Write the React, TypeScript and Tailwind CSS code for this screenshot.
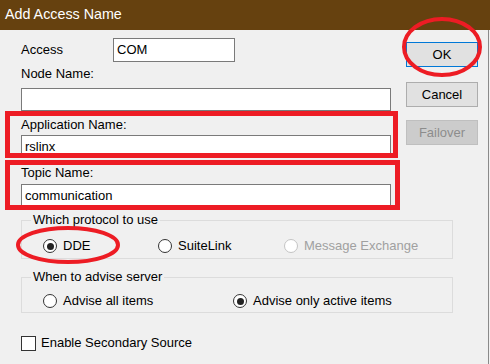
import React from "react";

const font = { fontFamily: '"Liberation Sans", Arial, sans-serif' };

function Radio({ checked, disabled, label }: { checked?: boolean; disabled?: boolean; label: string }) {
  return (
    <div className="flex items-center h-[16px]">
      <div
        className={
          "w-[14px] h-[14px] rounded-full bg-white border flex items-center justify-center " +
          (disabled ? "border-[#c4c4c4]" : "border-[#333333]")
        }
      >
        {checked && <div className="w-[7px] h-[7px] rounded-full bg-[#222222]" />}
      </div>
      <span className={"ml-[6px] leading-[16px] " + (disabled ? "text-[#a0a0a0]" : "text-black")}>{label}</span>
    </div>
  );
}

export default function App() {
  return (
    <div className="w-[490px] h-[364px] bg-[#f0f0f0] relative overflow-hidden text-[13px] text-black" style={font}>
      <div className="h-[30px] bg-[#66410f] text-white text-[14.3px] flex items-center pl-[5px]">Add Access Name</div>
      <div className="h-[334px] w-[489px] border-r border-[#8a8a8a]">
        <div className="flex">
          <div className="w-[392px] pl-[21px] pt-[8px]">
            <div className="flex items-center">
              <span className="w-[92px] leading-[16px]">Access</span>
              <div className="w-[122px] h-[24px] bg-white border border-[#7a7a7a] flex items-center pl-[3px]">COM</div>
            </div>
            <div className="mt-[4px] leading-[16px]">Node Name:</div>
            <div className="mt-[6px] w-[370px] h-[23px] bg-white border border-[#7a7a7a]" />
            <div className="mt-[6px] leading-[16px]">Application Name:</div>
            <div className="mt-[2px] w-[370px] h-[23px] bg-white border border-[#7a7a7a] flex items-center pl-[3px]">rslinx</div>
            <div className="mt-[7px] leading-[16px]">Topic Name:</div>
            <div className="mt-[3px] w-[370px] h-[23px] bg-white border border-[#7a7a7a] flex items-center pl-[3px]">communication</div>
          </div>
          <div className="ml-[14px] pt-[12px] flex flex-col">
            <div className="w-[72px] h-[25px] bg-[#e1e1e1] border border-[#0078d7] flex items-center justify-center">OK</div>
            <div className="mt-[15px] w-[72px] h-[25px] bg-[#e1e1e1] border border-[#adadad] flex items-center justify-center">Cancel</div>
            <div className="mt-[13px] w-[72px] h-[25px] bg-[#cccccc] border border-[#bfbfbf] text-[#8c8c8c] flex items-center justify-center">Failover</div>
          </div>
        </div>
        <div className="pl-[21px] mt-[5px]">
          <fieldset className="w-[432px] h-[47px] border border-[#dcdcdc] pl-[21px]">
            <legend className="-ml-[12px] px-[2px] leading-[16px]">Which protocol to use</legend>
            <div className="flex mt-[10px]">
              <div className="w-[115px]"><Radio checked label="DDE" /></div>
              <div className="w-[126px]"><Radio label="SuiteLink" /></div>
              <Radio disabled label="Message Exchange" />
            </div>
          </fieldset>
          <fieldset className="mt-[10px] w-[432px] h-[44px] border border-[#dcdcdc] pl-[21px]">
            <legend className="-ml-[12px] px-[2px] leading-[16px]">When to advise server</legend>
            <div className="flex mt-[8px]">
              <div className="w-[190px]"><Radio label="Advise all items" /></div>
              <Radio checked label="Advise only active items" />
            </div>
          </fieldset>
          <div className="mt-[22px] flex items-center">
            <div className="w-[15px] h-[15px] bg-white border border-[#333333]" />
            <span className="ml-[5px] leading-[16px]">Enable Secondary Source</span>
          </div>
        </div>
      </div>

      {/* red annotations */}
      <div className="absolute left-[5px] top-[111px] w-[393px] h-[47px] border-[5px] border-[#ed1c24]" />
      <div className="absolute left-[5px] top-[160px] w-[395px] h-[50px] border-[5px] border-[#ed1c24]" />
      <svg className="absolute left-0 top-0" width="490" height="364">
        <ellipse cx="442" cy="47" rx="38" ry="28" fill="none" stroke="#ed1c24" strokeWidth="4" />
        <ellipse cx="68" cy="245" rx="50" ry="17" fill="none" stroke="#ed1c24" strokeWidth="4" />
      </svg>
    </div>
  );
}
